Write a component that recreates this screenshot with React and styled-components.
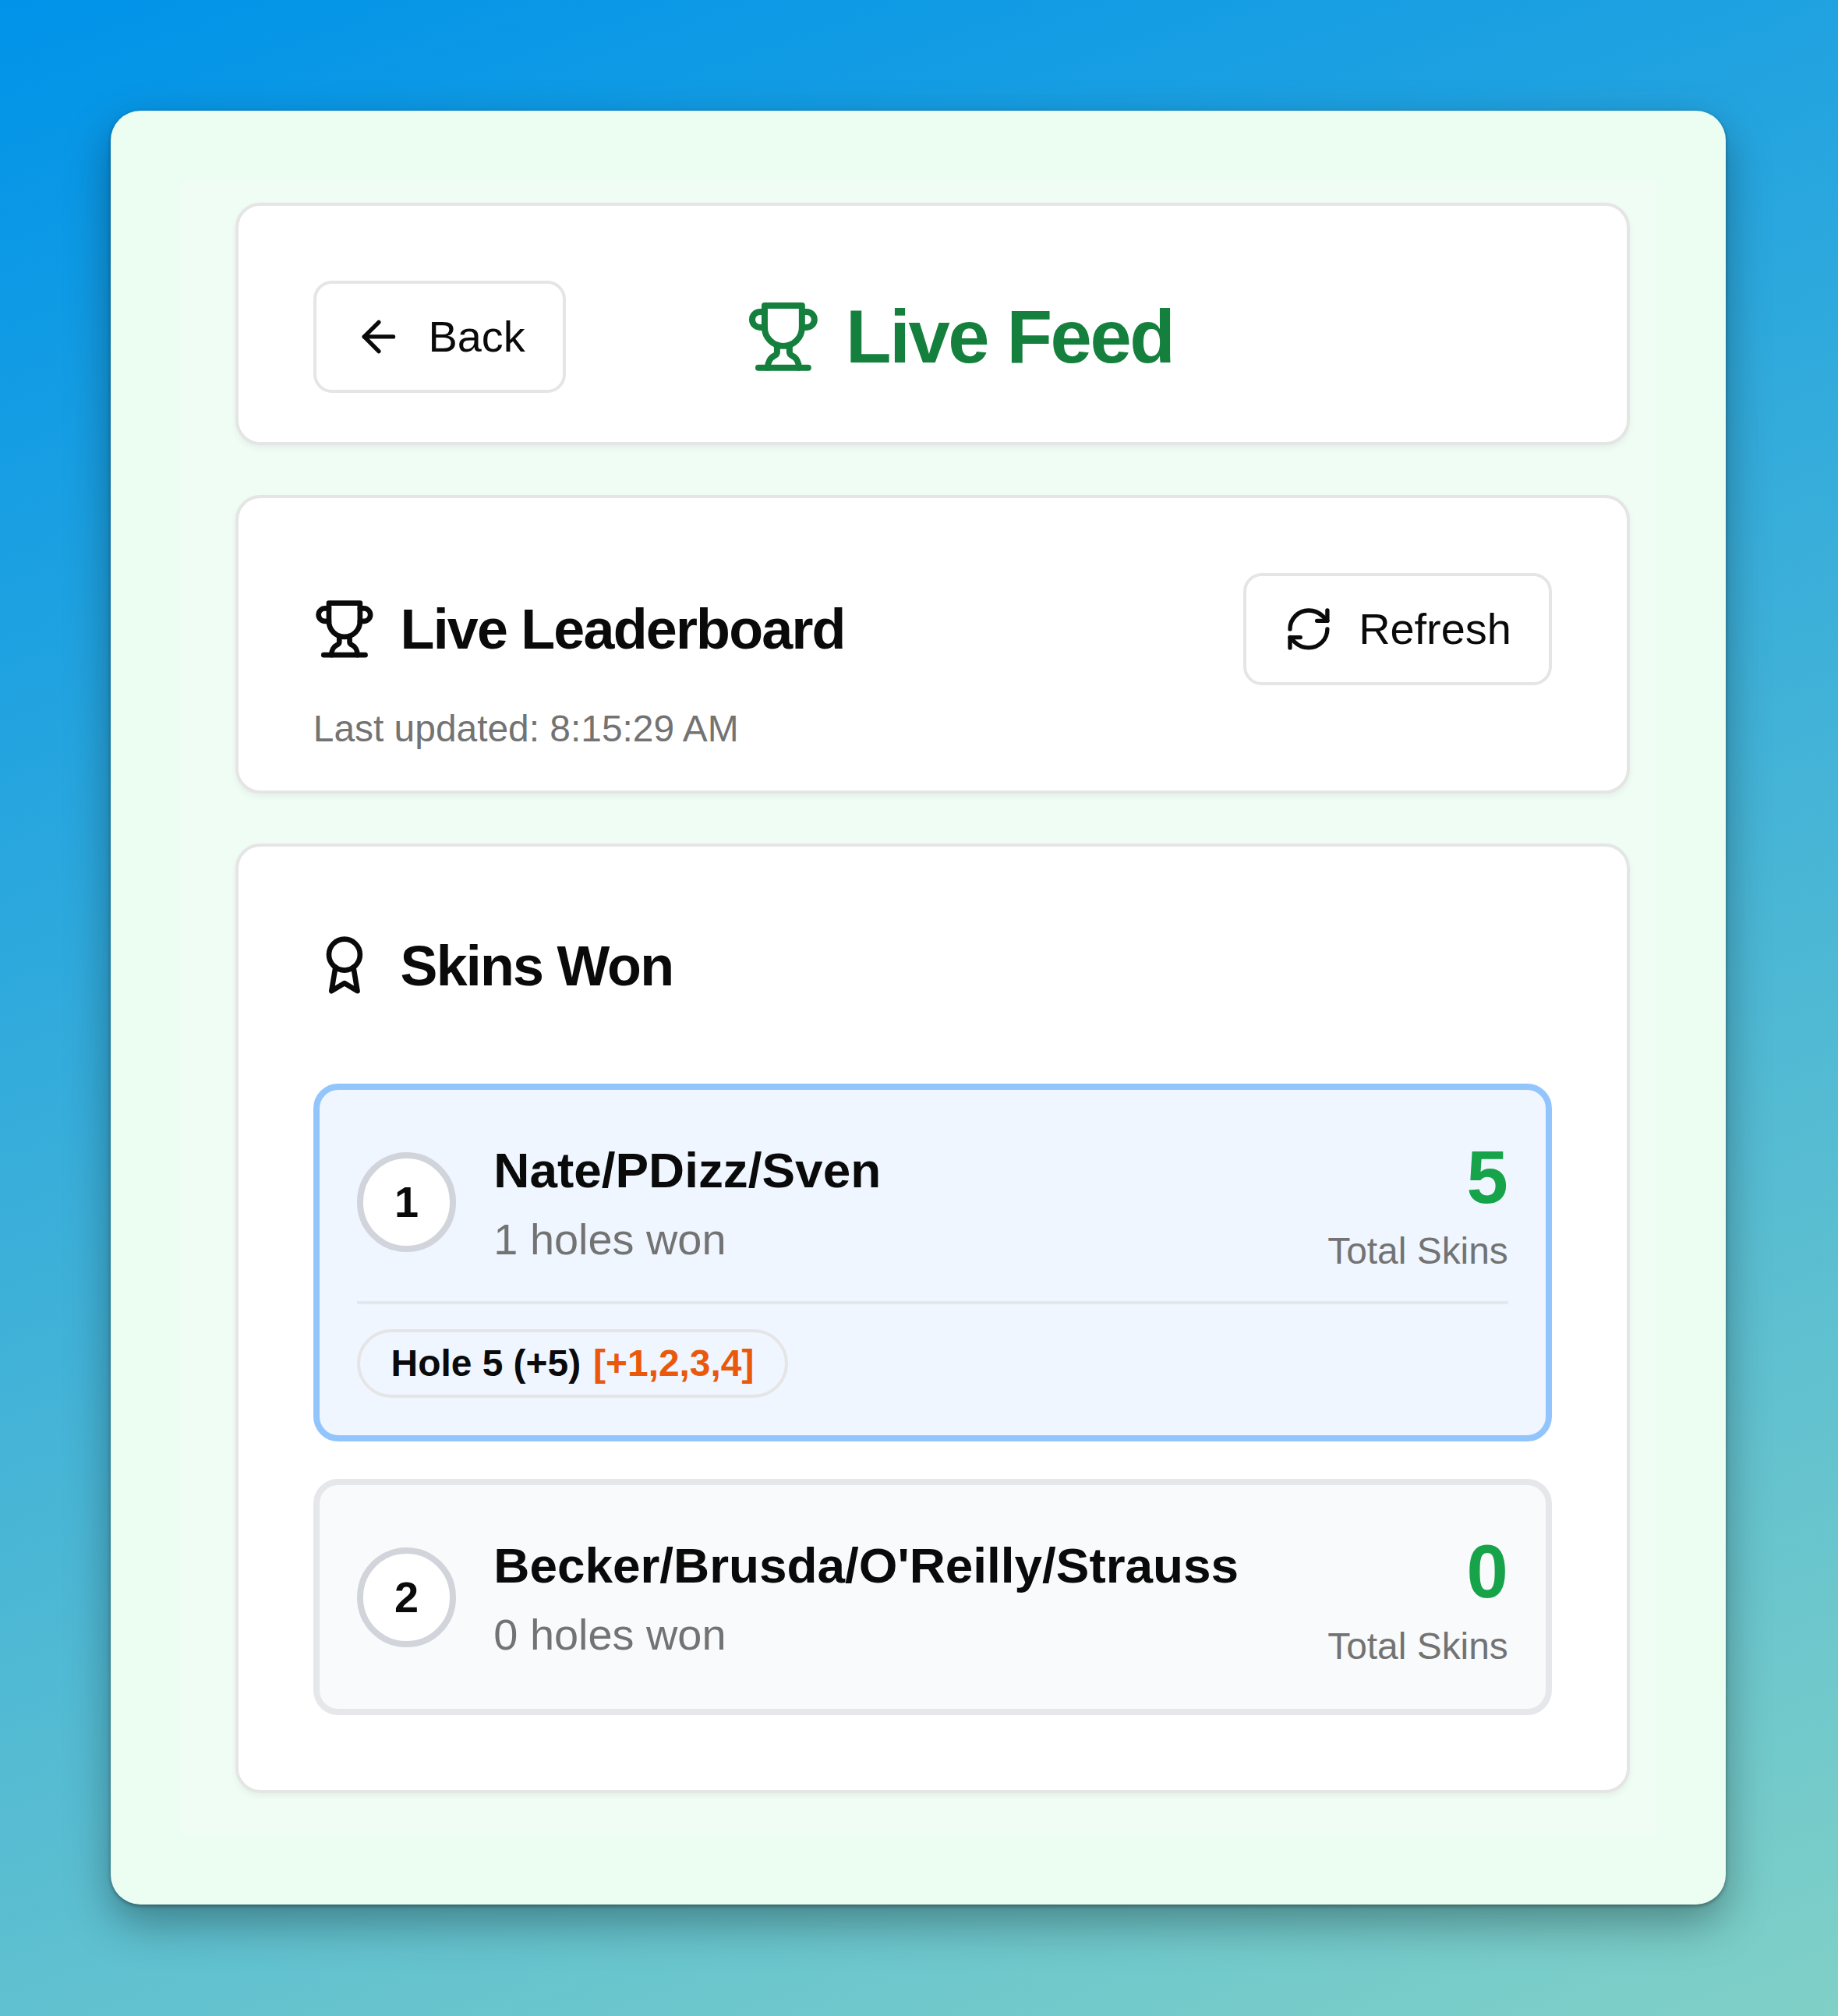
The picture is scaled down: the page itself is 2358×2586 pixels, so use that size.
import React from "react";
import styled, { createGlobalStyle } from "styled-components";
import { ArrowLeft, RefreshCw } from "lucide-react";

const UNIT = 3.992;
const u = (n) => `${n * UNIT}px`;

const GlobalStyle = createGlobalStyle`
  *, *::before, *::after { box-sizing: border-box; }
  html, body { margin: 0; padding: 0; }
  body {
    font-family: "Liberation Sans", Arial, Helvetica, sans-serif;
    color: #0a0a0a;
  }
  h1, h2, h3, p { margin: 0; }
  svg { display: block; flex-shrink: 0; }
`;

const Backdrop = styled.div`
  width: 2358px;
  height: 2586px;
  padding: 142px 144px 143px 142px;
  background: linear-gradient(160deg, #0093e9 0%, #80d0c7 100%);
  overflow: hidden;
`;

const Panel = styled.div`
  width: 100%;
  height: 100%;
  padding: 88px;
  border-radius: 38px;
  background: #ecfdf2;
  box-shadow: 0 2px 5px rgba(0, 0, 0, 0.35), 0 23px 56px rgba(0, 0, 0, 0.34);
`;

const Page = styled.main`
  height: 100%;
  padding: 30px 35.5px 55px 72px;
  display: flex;
  flex-direction: column;
  gap: ${u(16)};
  background: #effdf4;
`;

const Card = styled.section`
  border: 4px solid #e5e5e5;
  border-radius: ${u(8)};
  background: #fff;
  padding: ${u(24)} ${u(24)} ${(p) => u(p.$bottom)};
  box-shadow: 0 4px 8px rgba(0, 0, 0, 0.05);
`;

const Row = styled.div`
  display: flex;
  align-items: center;
  justify-content: space-between;
`;

const Button = styled.button`
  display: flex;
  align-items: center;
  gap: ${u(8)};
  height: ${u(36)};
  padding: 0 ${u(12)};
  border: 4px solid #e5e5e5;
  border-radius: ${u(6)};
  background: #fff;
  color: #0a0a0a;
  font: inherit;
  font-size: ${u(14)};
  line-height: ${u(20)};
`;

const PageTitle = styled.h1`
  display: flex;
  align-items: center;
  gap: ${u(8)};
  padding-left: 2px;
  color: #15803d;
  font-size: ${u(24)};
  line-height: ${u(32)};
  letter-spacing: -0.025em;
`;

const Spacer = styled.div`
  width: ${u(64)};
`;

const SectionTitle = styled.h2`
  display: flex;
  align-items: center;
  gap: ${u(8)};
  height: ${u(28)};
  font-size: ${u(18)};
  line-height: ${u(28)};
  letter-spacing: -0.025em;
`;

const TitleText = styled.span`
  padding-top: 3px;
`;

const Caption = styled.p`
  color: #737373;
  font-size: ${u(12)};
  line-height: ${u(16)};
`;

const UpdatedAt = styled(Caption)`
  margin-top: ${u(6)};
`;

const TeamList = styled.div`
  display: flex;
  flex-direction: column;
  gap: ${u(12)};
  margin-top: ${u(24)};
`;

const TeamCard = styled.article`
  padding: ${u(12)};
  border: 8px solid ${(p) => (p.$leader ? "#93c5fd" : "#e5e7eb")};
  border-radius: ${u(8)};
  background: ${(p) => (p.$leader ? "#eff6ff" : "#f9fafb")};
`;

const TeamInfo = styled.div`
  display: flex;
  align-items: center;
  gap: ${u(12)};
  padding-top: 1px;
`;

const Rank = styled.div`
  display: flex;
  align-items: center;
  justify-content: center;
  width: ${u(32)};
  height: ${u(32)};
  border: 8px solid #d1d5db;
  border-radius: 50%;
  background: #fff;
  font-size: ${u(14)};
  font-weight: 700;
`;

const TeamName = styled.h3`
  font-size: ${u(16)};
  line-height: ${u(24)};
`;

const HolesWon = styled.p`
  color: #737373;
  font-size: ${u(14)};
  line-height: ${u(20)};
`;

const Score = styled.div`
  text-align: right;
`;

const Total = styled.p`
  color: #16a34a;
  font-size: ${u(24)};
  line-height: ${u(32)};
  font-weight: 700;
`;

const Holes = styled.div`
  display: flex;
  margin-top: ${u(8)};
  padding-top: ${u(8)};
  border-top: 4px solid #e5e7eb;
`;

const Badge = styled.div`
  padding: ${u(2)} ${u(10)};
  border: 4px solid #e5e5e5;
  border-radius: 999px;
  font-size: ${u(12)};
  line-height: ${u(16)};
  font-weight: 700;
  white-space: nowrap;
`;

const Carried = styled.span`
  margin-left: ${u(4)};
  color: #ea580c;
`;

const StrokeIcon = styled.svg.attrs({ viewBox: "0 0 24 24" })`
  width: ${(p) => u(p.$size)};
  height: ${(p) => u(p.$size)};
  fill: none;
  stroke: currentColor;
  stroke-width: 2;
  stroke-linecap: round;
  stroke-linejoin: round;
`;

const Trophy = ({ size }) => (
  <StrokeIcon $size={size}>
    <path d="M6 9H4.5a2.5 2.5 0 0 1 0-5H6" />
    <path d="M18 9h1.5a2.5 2.5 0 0 0 0-5H18" />
    <path d="M4 22h16" />
    <path d="M10 14.66V17c0 .55-.47.98-.97 1.21C7.85 18.75 7 20.24 7 22" />
    <path d="M14 14.66V17c0 .55.47.98.97 1.21C16.15 18.75 17 20.24 17 22" />
    <path d="M18 2H6v7a6 6 0 0 0 12 0V2Z" />
  </StrokeIcon>
);

const Award = ({ size }) => (
  <StrokeIcon $size={size}>
    <circle cx="12" cy="8" r="6" />
    <path d="M15.477 12.89 17 22l-5-3-5 3 1.523-9.11" />
  </StrokeIcon>
);

const teams = [
  {
    name: "Nate/PDizz/Sven",
    won: 1,
    skins: 5,
    holes: [{ label: "Hole 5 (+5)", carried: "[+1,2,3,4]" }],
  },
  { name: "Becker/Brusda/O'Reilly/Strauss", won: 0, skins: 0, holes: [] },
];

function Team({ team, rank }) {
  return (
    <TeamCard $leader={rank === 1}>
      <Row>
        <TeamInfo>
          <Rank>{rank}</Rank>
          <div>
            <TeamName>{team.name}</TeamName>
            <HolesWon>{team.won} holes won</HolesWon>
          </div>
        </TeamInfo>
        <Score>
          <Total>{team.skins}</Total>
          <Caption>Total Skins</Caption>
        </Score>
      </Row>
      {team.holes.length > 0 && (
        <Holes>
          {team.holes.map((hole) => (
            <Badge key={hole.label}>
              {hole.label}
              <Carried>{hole.carried}</Carried>
            </Badge>
          ))}
        </Holes>
      )}
    </TeamCard>
  );
}

export default function App() {
  return (
    <>
      <GlobalStyle />
      <Backdrop>
        <Panel>
          <Page>
            <Card $bottom={16}>
              <Row>
                <Button>
                  <ArrowLeft size={16 * UNIT} />
                  Back
                </Button>
                <PageTitle>
                  <Trophy size={24} />
                  Live Feed
                </PageTitle>
                <Spacer />
              </Row>
            </Card>
            <Card $bottom={12}>
              <Row>
                <SectionTitle>
                  <Trophy size={20} />
                  <TitleText>Live Leaderboard</TitleText>
                </SectionTitle>
                <Button>
                  <RefreshCw size={16 * UNIT} />
                  Refresh
                </Button>
              </Row>
              <UpdatedAt>Last updated: 8:15:29 AM</UpdatedAt>
            </Card>
            <Card $bottom={24}>
              <SectionTitle>
                <Award size={20} />
                <TitleText>Skins Won</TitleText>
              </SectionTitle>
              <TeamList>
                {teams.map((team, i) => (
                  <Team key={team.name} team={team} rank={i + 1} />
                ))}
              </TeamList>
            </Card>
          </Page>
        </Panel>
      </Backdrop>
    </>
  );
}
